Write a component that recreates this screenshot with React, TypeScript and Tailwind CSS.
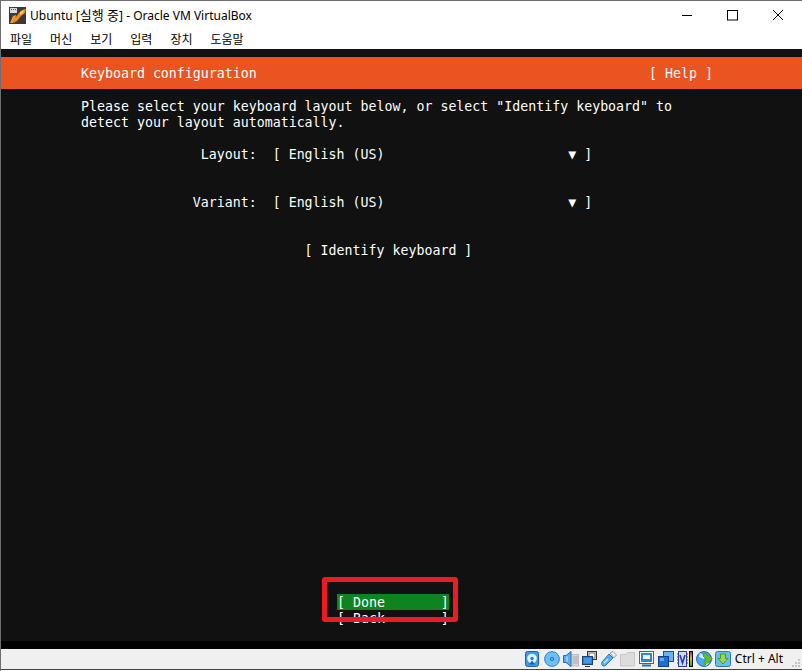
import React from "react";

const Row: React.FC<{ text?: string; className?: string }> = ({ text = "", className = "" }) => (
  <div className={`h-4 whitespace-pre leading-[18px] ${className}`}>{text}</div>
);

const AppIcon = () => (
  <svg width="17" height="17" viewBox="0 0 17 17" className="shrink-0">
    <rect width="17" height="17" fill="#3a3a3a" />
    <path d="M1 16 L4 9 L7 8 L6 13 L4 16 Z" fill="#f59a2c" />
    <path d="M6 11 L10 6 L13 3 L17 2 L16 6 L12 9 L8 14 L5 16 Z" fill="#f08a1d" />
    <path d="M11 5 L15 3 L14 6 L11 8 Z" fill="#fcc46b" />
    <rect x="1" y="1" width="7" height="5" fill="#d9d9d9" />
    <rect x="2" y="2" width="1" height="1" fill="#555" />
    <rect x="4" y="2" width="1" height="1" fill="#555" />
    <rect x="6" y="2" width="1" height="1" fill="#555" />
  </svg>
);

// window controls
const WinButtons = () => (
  <div className="flex items-center pr-[1px]">
    <svg width="46" height="27" viewBox="0 0 46 27">
      <path d="M19 14.5 H29" stroke="#000" strokeWidth="1" />
    </svg>
    <svg width="46" height="27" viewBox="0 0 46 27">
      <rect x="18.5" y="9.5" width="10" height="9.5" fill="none" stroke="#000" strokeWidth="1" />
    </svg>
    <svg width="46" height="27" viewBox="0 0 46 27">
      <path d="M18 9 L28 19 M28 9 L18 19" stroke="#000" strokeWidth="1" />
    </svg>
  </div>
);

const DiskIcon = () => (
  <svg width="14" height="16" viewBox="0 0 14 16">
    <rect x="0.5" y="0.5" width="13" height="15" rx="2" fill="#3f9bea" stroke="#1b62b5" />
    <circle cx="7" cy="7.5" r="4.8" fill="#dff0ff" />
    <circle cx="7" cy="7.5" r="1.7" fill="#2a7fd4" />
    <path d="M7 9.5 L10 13.5 L4 13.5 Z" fill="#1b62b5" />
  </svg>
);

const CdIcon = () => (
  <svg width="16" height="16" viewBox="0 0 16 16">
    <circle cx="8" cy="8" r="7.4" fill="#6cc0f2" stroke="#2f86cf" />
    <circle cx="8" cy="8" r="2.1" fill="#1f6fbe" />
    <circle cx="8" cy="8" r="0.8" fill="#d8f0ff" />
  </svg>
);

const AudioIcon = () => (
  <svg width="16" height="16" viewBox="0 0 16 16">
    <rect x="9" y="3.5" width="6.5" height="11.5" fill="#d6d6d6" stroke="#bdbdbd" />
    <path d="M10 6 H15 M10 8 H15 M10 10 H15 M10 12 H15" stroke="#a8a8a8" />
    <path d="M0.5 4.5 H3 L8 0.5 V15.5 L3 11.5 H0.5 Z" fill="#58aeea" stroke="#1f6fbe" />
    <path d="M4 5.5 V10.5" stroke="#d5eeff" />
  </svg>
);

const NetIcon = () => (
  <svg width="15" height="16" viewBox="0 0 15 16">
    <rect x="5.5" y="0.5" width="9" height="8" fill="#e8e8e8" stroke="#333" />
    <rect x="7" y="2" width="6" height="5" fill="#fff" stroke="#777" />
    <rect x="0.5" y="5.5" width="10" height="8" fill="#2f7fd6" stroke="#1a3f78" />
    <rect x="2" y="7" width="7" height="5" fill="#3f9bea" />
    <path d="M3 15.5 H8" stroke="#333" />
  </svg>
);

const UsbIcon = () => (
  <svg width="16" height="16" viewBox="0 0 16 16">
    <path d="M1 11 L8 3 L12 7 L5 14 Q3 16 1.5 14.5 Q0 13 1 11 Z" fill="#57aef0" stroke="#2378c8" />
    <path d="M9 2 L12 0.5 L15.5 4 L13 7 Z" fill="#eeeeee" stroke="#9a9a9a" />
    <path d="M3 12 L7 8" stroke="#c9e8ff" strokeWidth="1.5" />
  </svg>
);

const FolderIcon = () => (
  <svg width="15" height="16" viewBox="0 0 15 16">
    <path d="M0.5 3.5 H6 L7.5 1.5 H14.5 V15 H0.5 Z" fill="#dcdcdc" stroke="#c6c6c6" />
  </svg>
);

const DisplayIcon = () => (
  <svg width="15" height="16" viewBox="0 0 15 16">
    <rect x="0.5" y="0.5" width="14" height="12" fill="#fff" stroke="#1f6fbe" />
    <rect x="2" y="2" width="11" height="9" fill="#2f86d8" />
    <rect x="4" y="4" width="7" height="4" fill="#e8f4ff" />
    <path d="M3 14.5 H12" stroke="#1f6fbe" strokeWidth="2" />
  </svg>
);

const CaptureIcon = () => (
  <svg width="16" height="16" viewBox="0 0 16 16">
    <rect x="5.5" y="0.5" width="10" height="10" fill="#69b3ec" stroke="#1b4f96" />
    <rect x="0.5" y="5.5" width="10" height="10" fill="#1f6fd0" stroke="#173f7d" />
    <rect x="2" y="7" width="4" height="3" fill="#62aaf0" />
  </svg>
);

const VtIcon = () => (
  <svg width="11" height="16" viewBox="0 0 11 16">
    <rect x="1.5" y="0.5" width="8" height="15" fill="#cfd8f5" stroke="#2b3f9e" />
    <path d="M0 3 H2 M0 6 H2 M0 9 H2 M0 12 H2 M9 3 H11 M9 6 H11 M9 9 H11 M9 12 H11" stroke="#2b3f9e" />
    <path d="M3 4 L5.5 12 L8 4" fill="none" stroke="#2b3f9e" strokeWidth="1.6" />
  </svg>
);

const MeterIcon = () => (
  <svg width="4" height="16" viewBox="0 0 4 16">
    <defs>
      <linearGradient id="meter" x1="0" y1="0" x2="0" y2="1">
        <stop offset="0" stopColor="#e02020" />
        <stop offset="0.45" stopColor="#e8c010" />
        <stop offset="1" stopColor="#20b020" />
      </linearGradient>
    </defs>
    <rect width="4" height="16" fill="#000" />
    <rect x="1" y="1" width="2" height="14" fill="url(#meter)" />
  </svg>
);

const GlobeIcon = () => (
  <svg width="17" height="16" viewBox="0 0 17 16">
    <circle cx="8" cy="8" r="7.5" fill="#4ba6ea" stroke="#1f6fbe" />
    <path d="M4 2 L9 5 L8 8 L3 6 Z M9 10 L13 12 L10 15 L8 12 Z" fill="#d4ecfa" />
    <path d="M8 2 L15 6 L16.5 8 L9 14 L8 11 L10 8 L7 5 Z" fill="#5fbf32" stroke="#3a8a1e" strokeWidth="0.6" />
  </svg>
);

const DownIcon = () => (
  <svg width="16" height="16" viewBox="0 0 16 16">
    <rect x="0.5" y="0.5" width="15" height="15" rx="2" fill="#68bdf0" stroke="#2378c8" />
    <path d="M5.5 3 H10.5 V7.5 H13 L8 13 L3 7.5 H5.5 Z" fill="#9ad84a" stroke="#4b9a1e" />
  </svg>
);

const Grip = () => (
  <svg width="8" height="8" viewBox="0 0 8 8" className="absolute bottom-[2px] right-[2px]">
    <path d="M6 0 h2 v2 h-2 Z M3 3 h2 v2 h-2 Z M6 3 h2 v2 h-2 Z M0 6 h2 v2 h-2 Z M3 6 h2 v2 h-2 Z M6 6 h2 v2 h-2 Z" fill="#c4c4c4" />
  </svg>
);

const menus = ["파일", "머신", "보기", "입력", "장치", "도움말"];

const statusIcons = [
  <DiskIcon key="disk" />,
  <CdIcon key="cd" />,
  <AudioIcon key="audio" />,
  <NetIcon key="net" />,
  <UsbIcon key="usb" />,
  <FolderIcon key="folder" />,
  <DisplayIcon key="display" />,
  <CaptureIcon key="capture" />,
  <div key="vt" className="flex items-center gap-[1px]">
    <VtIcon />
    <MeterIcon />
  </div>,
  <GlobeIcon key="globe" />,
  <DownIcon key="down" />,
];

export default function App() {
  return (
    <div
      className="relative flex h-[671px] w-[802px] flex-col overflow-hidden border-l border-t border-[#6e6e6e] bg-white text-black"
      style={{ fontFamily: '"Noto Sans", "Noto Sans CJK KR", sans-serif' }}
    >
      {/* title bar */}
      <div className="flex h-[27px] shrink-0 items-center justify-between">
        <div className="flex items-center gap-[4px] pl-[8px] pt-[1px]">
          <AppIcon />
          <span className="text-[12px] leading-none">
            Ubuntu [<span className="text-[13px]">실행 중</span>] - Oracle VM VirtualBox
          </span>
        </div>
        <WinButtons />
      </div>

      {/* menu bar */}
      <div className="flex h-[21px] shrink-0 items-center gap-[18px] pl-[9px] pt-[3px] text-[12px] leading-none">
        {menus.map((m) => (
          <span key={m}>{m}</span>
        ))}
      </div>

      {/* vm screen */}
      <div
        className="h-[592px] shrink-0 overflow-hidden bg-[#111111] pt-[8px] text-[13.28px] text-white"
        style={{ fontFamily: '"DejaVu Sans Mono", "Liberation Mono", monospace' }}
      >
        <div className="flex h-8 items-center justify-between bg-[#e95420] pl-[80px] pr-[89px]">
          <span className="whitespace-pre pt-[2px] leading-4">Keyboard configuration</span>
          <span className="whitespace-pre pt-[2px] leading-4">[ Help ]</span>
        </div>
        <div className="pl-[80px] pt-[9px]">
          <Row text={'Please select your keyboard layout below, or select "Identify keyboard" to'} />
          <Row text="detect your layout automatically." />
        </div>
        <div className="pl-[80px] pt-4">
          <Row text="               Layout:  [ English (US)                       ▼ ]" />
          <Row />
          <Row />
          <Row text="              Variant:  [ English (US)                       ▼ ]" />
          <Row />
          <Row />
          <Row text="                            [ Identify keyboard ]" />
        </div>
        <div className="pl-[336px] pt-[336px]">
          <Row text="[ Done       ]" className="w-[112px] bg-[#0e8420]" />
          <Row text="[ Back       ]" />
        </div>
      </div>

      {/* strip under the guest screen */}
      <div className="h-[8px] shrink-0 bg-black" />

      {/* status bar */}
      <div className="relative flex h-[21px] shrink-0 items-center justify-end border-b border-[#444] bg-[#f0f0f0] pr-[19px]">
        {statusIcons.map((icon, i) => (
          <div key={i} className="flex w-[19px] shrink-0 items-center">
            {icon}
          </div>
        ))}
        <span className="ml-[1px] text-[12px] leading-none">Ctrl + Alt</span>
        <Grip />
      </div>

      {/* annotation drawn on top of the capture */}
      <div className="absolute left-[321px] top-[576px] h-[45px] w-[136px] rounded-[3px] border-[5px] border-[#ed1c24]" />
    </div>
  );
}
